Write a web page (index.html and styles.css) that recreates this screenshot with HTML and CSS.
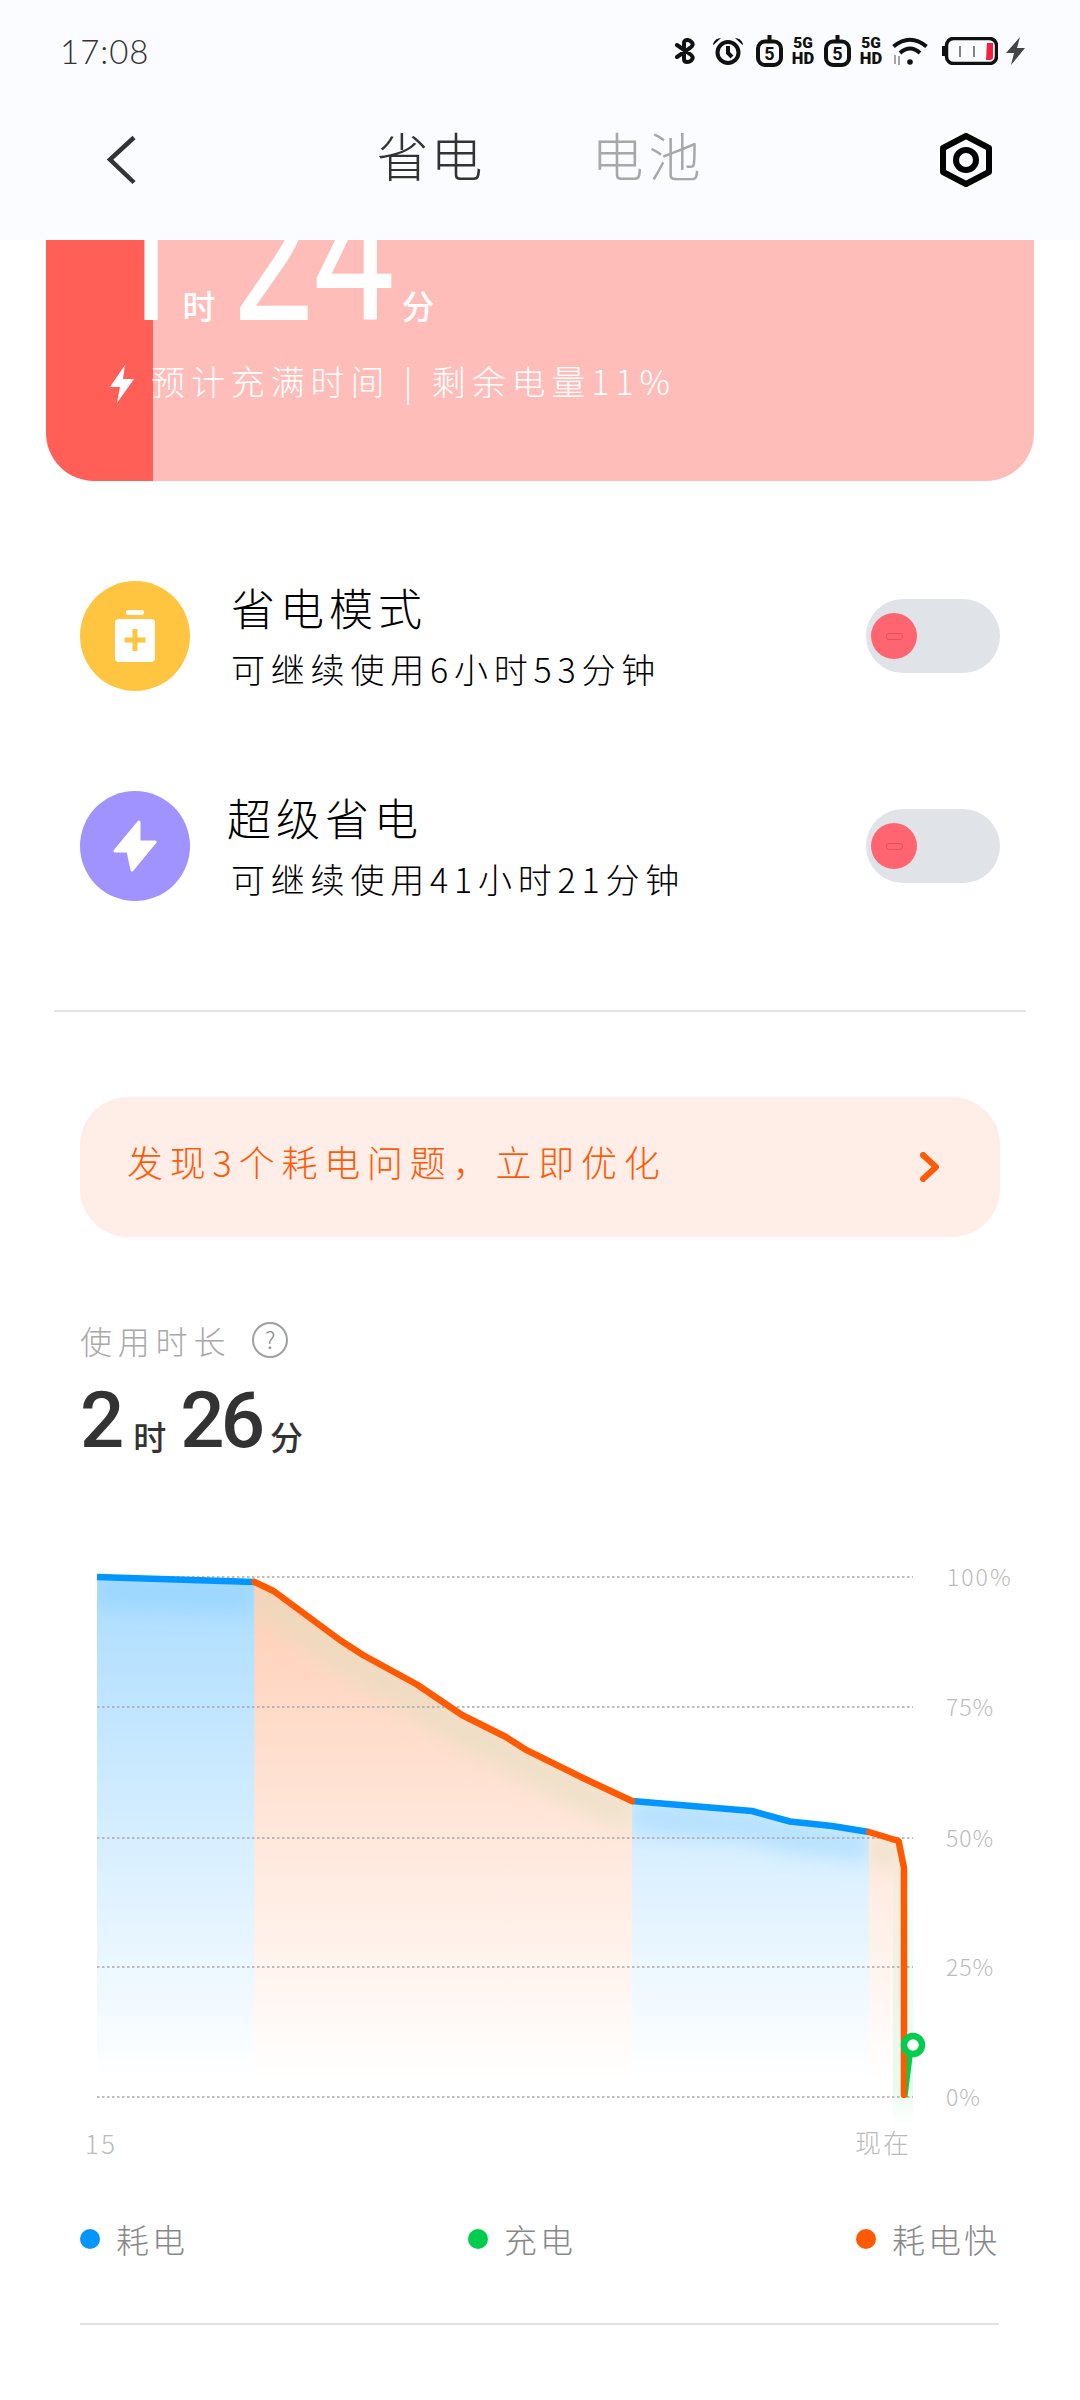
FILE: index.html
```html
<!DOCTYPE html>
<html lang="zh-CN">
<head>
<meta charset="utf-8">
<title>省电</title>
<link rel="stylesheet" href="styles.css">
</head>
<body>
<div class="page">
  <header class="top">
    <div class="status">
      <span class="clock">17:08</span>
      <div class="status-icons">
        <svg class="ic-bt" viewBox="0 0 21 26" width="21" height="26"><path d="M2 19 L15 10 Q19 7 17 4.5 Q15 1.8 12 2 Q9 2.5 9 5 V21 Q9 24 12 24 Q15.5 24 17 21.5 Q19 19 15 16 L2 7"/></svg>
        <svg class="ic-alarm" viewBox="0 0 32 28" width="32" height="28"><circle cx="16" cy="15.5" r="10.5"/><path d="M16 9 V16 L20 20"/><path class="solid" d="M1 7 Q3 1 9 1 L1.5 8Z M31 7 Q29 1 23 1 L30.5 8Z"/></svg>
        <svg class="ic-timer" viewBox="0 0 27 32" width="27" height="32"><path d="M13.5 0 V6"/><rect x="2" y="6.5" width="23" height="23.5" rx="7"/><text class="timer-num" x="13.5" y="24.500">5</text></svg>
        <div class="net"><span>5G</span><span>HD</span></div>
        <svg class="ic-timer" viewBox="0 0 27 32" width="27" height="32"><path d="M13.5 0 V6"/><rect x="2" y="6.5" width="23" height="23.5" rx="7"/><text class="timer-num" x="13.5" y="24.500">5</text></svg>
        <div class="net"><span>5G</span><span>HD</span></div>
        <svg class="ic-wifi" viewBox="0 0 36 28" width="36" height="28"><path d="M1.5 9.5 Q18 -4 34.5 9.5"/><path d="M8 16 Q18 7 28 16"/><circle class="solid" cx="18" cy="25" r="2.8"/><path class="thin" d="M3 18 V27 M7 19 V28"/></svg>
        <svg class="ic-batt" viewBox="0 0 56 28" width="56" height="28"><path class="solid" d="M0 9 h3 v10 h-3z"/><rect x="4.5" y="1.5" width="50" height="25" rx="7"/><path class="thin" d="M18 9 V20 M32 9 V20"/><path class="red" d="M45 6 H51 V20 Q51 23 48 23 H44Z"/></svg>
        <svg class="ic-charge" viewBox="0 0 19 28" width="19" height="28"><path d="M14 0 L0 16 H8 L5 28 L19 11 H11Z"/></svg>
      </div>
    </div>
    <nav class="nav">
      <svg class="ic-back" viewBox="0 0 30 50" width="30" height="50"><path d="M28 2.5 L4 24.5 L28 47.5"/></svg>
      <div class="tabs">
        <span class="tab tab-on">省电</span>
        <span class="tab tab-off">电池</span>
      </div>
      <svg class="ic-gear" viewBox="0 0 52 54" width="52" height="54"><path d="M26 3 L49 15 V39 L26 51 L3 39 V15Z"/><circle cx="26" cy="27" r="10"/></svg>
    </nav>
  </header>

  <section class="hero">
    <div class="hero-time"><b>1</b><i>时</i><b>24</b><i>分</i></div>
    <div class="hero-sub">
      <svg class="ic-hero" viewBox="0 0 24 38" width="24" height="38"><path d="M15 0 L0 22 H10 L7 38 L24 14 H13Z"/></svg>
      <span>预计充满时间 | 剩余电量11%</span>
    </div>
  </section>

  <section class="modes">
    <div class="mode">
      <div class="badge badge-y">
        <svg viewBox="0 0 40 52" width="40" height="52"><rect class="w" x="11" y="0" width="18" height="5" rx="2.5"/><rect class="w" x="0" y="9" width="40" height="43" rx="4"/><path class="plus" d="M20 19 V41 M9.500 30 H30.500"/></svg>
      </div>
      <div class="mode-text">
        <div class="mode-title">省电模式</div>
        <div class="mode-sub">可继续使用6小时53分钟</div>
      </div>
      <div class="toggle"><span class="knob"></span></div>
    </div>
    <div class="mode">
      <div class="badge badge-p">
        <svg viewBox="0 0 44 52" width="44" height="52"><path class="w w-round" d="M26 2 L2 31 H15 L19 50 L42 22 H26Z"/></svg>
      </div>
      <div class="mode-text">
        <div class="mode-title mode-title-2">超级省电</div>
        <div class="mode-sub">可继续使用41小时21分钟</div>
      </div>
      <div class="toggle"><span class="knob"></span></div>
    </div>
  </section>

  <hr class="rule">

  <div class="tip">
    <span>发现3个耗电问题，立即优化</span>
    <svg viewBox="0 0 20 30" width="20" height="30"><path d="M3 3 L16 15 L3 27"/></svg>
  </div>

  <div class="usage-label">
    <span>使用时长</span>
    <span class="help">?</span>
  </div>
  <div class="usage-time"><b>2</b><i>时</i><b>26</b><i>分</i></div>

  <div class="chart">
    <svg viewBox="60 1560 960 600" width="960" height="600">
      <defs>
        <linearGradient id="fadeBlue" gradientUnits="userSpaceOnUse" x1="0" y1="1576" x2="0" y2="2080">
          <stop offset="0" stop-color="#0096ff" stop-opacity=".33"/>
          <stop offset="1" stop-color="#0096ff" stop-opacity="0"/>
        </linearGradient>
        <linearGradient id="fadeOrange" gradientUnits="userSpaceOnUse" x1="0" y1="1576" x2="0" y2="2080">
          <stop offset="0" stop-color="#ff5a08" stop-opacity=".3"/>
          <stop offset="1" stop-color="#ff5a08" stop-opacity="0"/>
        </linearGradient>
        <linearGradient id="fadeGreen" gradientUnits="userSpaceOnUse" x1="0" y1="1867" x2="0" y2="2125">
          <stop offset="0" stop-color="#00cc4e" stop-opacity=".02"/>
          <stop offset=".85" stop-color="#00cc4e" stop-opacity=".09"/>
          <stop offset="1" stop-color="#00cc4e" stop-opacity="0"/>
        </linearGradient>
        <clipPath id="clipBlue"><path d="M97 1576 L254.500 1581 V2096 H97Z M632 1800 L752 1810 L790 1820.500 L832 1825 L869 1831 V2096 H632Z"/></clipPath>
        <clipPath id="clipOrange"><path d="M254.500 1581 L273.600 1590 L340.600 1639.500 L363 1654 L417 1683.500 L462 1714 L506 1736 L525.600 1748.600 L583 1777 L632 1800 V2096 H254.500Z M869 1831 L898.600 1840 L904 1867 V2096 H869Z"/></clipPath>
        <filter id="soft" filterUnits="userSpaceOnUse" x="60" y="1540" width="900" height="400"><feGaussianBlur stdDeviation="10"/></filter>
      </defs>
      <rect class="glow" x="893" y="1867" width="20" height="258"/>
      <path class="area-b" d="M97 1576 L254.500 1581 V2096 H97Z M632 1800 L752 1810 L790 1820.500 L832 1825 L869 1831 V2096 H632Z"/>
      <path class="area-o" d="M254.500 1581 L273.600 1590 L340.600 1639.500 L363 1654 L417 1683.500 L462 1714 L506 1736 L525.600 1748.600 L583 1777 L632 1800 V2096 H254.500Z M869 1831 L898.600 1840 L904 1867 V2096 H869Z"/>
      <g clip-path="url(#clipBlue)"><path class="band-b" filter="url(#soft)" d="M97 1592 L254.500 1597 M632 1816 L752 1826 L790 1836.500 L832 1841 L869 1847"/></g>
      <g clip-path="url(#clipOrange)"><path class="band-o" filter="url(#soft)" d="M254.500 1597 L273.600 1606 L340.600 1655.500 L363 1670 L417 1699.500 L462 1730 L506 1752 L525.600 1764.600 L583 1793 L632 1816 M869 1847 L898.600 1856"/></g>
      <path class="grid" d="M97 1576 H913 M97 1706 H913 M97 1837 H913 M97 1966 H913 M97 2096 H913"/>
      <path class="line-b" d="M97 1576 L254.500 1581 M632 1800 L752 1810 L790 1820.500 L832 1825 L869 1831"/>
      <path class="line-o" d="M254.500 1581 L273.600 1590 L340.600 1639.500 L363 1654 L417 1683.500 L462 1714 L506 1736 L525.600 1748.600 L583 1777 L632 1800 M869 1831 L898.600 1840 L904 1867 V2094"/>
      <path class="pin" d="M907 2052 L912.500 2056 L907.500 2096 H906.500Z"/>
      <circle class="pin-ring" cx="913" cy="2044" r="9"/>
      <text class="axis" x="947" y="1585">100%</text>
      <text class="axis axis-s" x="946" y="1715">75%</text>
      <text class="axis axis-s" x="946" y="1846">50%</text>
      <text class="axis axis-s" x="946" y="1975">25%</text>
      <text class="axis axis-s" x="946" y="2105">0%</text>
      <text class="axis axis-x" x="85" y="2153">15</text>
      <text class="axis axis-x" x="855" y="2152">现在</text>
    </svg>
  </div>

  <div class="legend">
    <div class="key"><span class="dot dot-b"></span>耗电</div>
    <div class="key"><span class="dot dot-g"></span>充电</div>
    <div class="key"><span class="dot dot-o"></span>耗电快</div>
  </div>
  <hr class="rule rule-b">
</div>
</body>
</html>
```
FILE: styles.css
```css
* { box-sizing: border-box; }
html, body { margin: 0; padding: 0; background: #fff; }
body { font-family: "Noto Sans CJK SC", "Noto Sans", sans-serif; font-weight: 300; }
.page { width: 1080px; height: 2400px; overflow: hidden; }

/* header */
.top { height: 240px; background: #fbfcff; }
.status { height: 85px; padding: 37px 55px 0 60px; display: flex; justify-content: space-between; align-items: flex-start; }
.clock { font-family: "Lato", sans-serif; font-weight: 300; font-size: 33px; line-height: 28px; letter-spacing: 1px; color: #333; }
.status-icons { display: flex; align-items: center; height: 32px; margin-top: -2px; }
.status-icons svg { fill: none; stroke: #111; stroke-width: 4; display: block; }
.status-icons .solid { fill: #111; stroke: none; }
.ic-bt { margin-right: 16px; stroke-linecap: round; }
.ic-alarm { margin-right: 12px; }
.ic-timer { margin-right: 7px; }
.timer-num { font-family: "Roboto", sans-serif; font-size: 18px; font-weight: 700; text-anchor: middle; fill: #111; stroke: none; }
.net { display: flex; flex-direction: column; width: 26px; margin-right: 8px; font-family: "Roboto", sans-serif; font-weight: 900; color: #111; text-align: center; }
.net span { font-size: 15.500px; line-height: 16px; }
.net span + span { font-size: 16.500px; }
.status-icons .ic-wifi { margin-right: 14px; stroke-width: 4; }
.status-icons .ic-wifi .thin { stroke: #888; stroke-width: 1.500; }
.status-icons .ic-batt { margin-right: 8px; stroke-width: 3.500; }
.status-icons .ic-batt .thin { stroke: #333; stroke-width: 1.200; }
.status-icons .ic-batt .red { fill: #f5203f; stroke: none; }
.status-icons .ic-charge { fill: #444; stroke: none; }

.nav { height: 155px; padding: 0 88px 6px 106px; display: flex; align-items: center; justify-content: space-between; }
.ic-back { fill: none; stroke: #333; stroke-width: 4.500; }
.tabs { display: flex; gap: 107px; margin-left: 6px; margin-top: -10px; }
.tab { font-size: 52px; line-height: 60px; letter-spacing: 2px; color: #a8a8a8; }
.tab-on { color: #333; }
.tab-off { letter-spacing: 5px; }
.ic-gear { fill: none; stroke: #000; stroke-width: 6; stroke-linejoin: round; }

/* hero */
.hero { height: 241px; margin: 0 46px; border-radius: 0 0 48px 48px; overflow: hidden; color: #fff;
  background: linear-gradient(90deg, #ff5f57 107px, #ffbdb9 107px); }
.hero-time { height: 81px; padding-left: 60px; display: flex; align-items: flex-end; }
.hero-time b { font-family: "Roboto", sans-serif; font-weight: 400; font-size: 145px; line-height: 60px; height: 81px; display: block; transform: scaleY(1.32); transform-origin: 0 79.500px; }
.hero-time i { font-style: normal; font-weight: 500; font-size: 33px; line-height: 40px; margin: 0 16px 0 -5px; transform: translateY(4px); }
.hero-time b + i + b + i { margin-left: 7px; }
.hero-sub { display: flex; align-items: center; padding-left: 64px; margin-top: 44px; height: 38px; }
.hero-sub span { font-size: 34px; line-height: 38px; letter-spacing: 5.900px; margin: 0 0 6px 17px; }
.ic-hero { fill: #fff; }

/* modes */
.modes { margin-top: 100px; padding: 0 80px; display: flex; flex-direction: column; gap: 100px; }
.mode { height: 110px; display: flex; align-items: center; }
.badge { width: 110px; height: 110px; border-radius: 50%; display: flex; align-items: center; justify-content: center; flex: none; }
.badge-y { background: #ffc440; }
.badge-p { background: #a093ff; }
.badge .w { fill: #fff; }
.badge .w-round { stroke: #fff; stroke-width: 3; stroke-linejoin: round; }
.badge .plus { fill: none; stroke: #ffc440; stroke-width: 5; }
.mode-text { flex: 1; margin-left: 41px; padding-top: 7px; }
.mode-title { font-size: 44px; line-height: 52px; letter-spacing: 5px; color: #000; margin-top: -8px; }
.mode-title-2 { margin-left: -4px; }
.mode-sub { font-size: 34px; line-height: 42px; letter-spacing: 5.800px; color: #000; margin-top: 15px; }
.toggle { width: 134px; height: 74px; border-radius: 37px; background: #e0e4e8; padding: 14px 5px; flex: none; }
.knob { display: flex; align-items: center; justify-content: center; width: 46px; height: 46px; border-radius: 50%; background: #ff6570; }
.knob::after { content: ""; width: 15px; height: 5px; border-radius: 3px; border: 1px solid rgba(190, 60, 70, .45); }

.rule { border: 0; height: 2px; background: #e2e2e2; margin: 109px 54px 0; }
.tip { margin: 85px 80px 0; height: 140px; padding: 0 60px 0 47px; border-radius: 48px; background: #ffeee7; color: #ff5a08; display: flex; align-items: center; justify-content: space-between; }
.tip span { font-size: 36px; line-height: 44px; letter-spacing: 6.800px; margin-bottom: 12px; }
.tip svg { fill: none; stroke: #ff5a08; stroke-width: 6; stroke-linecap: round; stroke-linejoin: round; }

.usage-label { margin: 84px 80px 0; height: 38px; display: flex; align-items: center; gap: 24px; color: #a8a8a8; }
.usage-label span:first-child { font-size: 32px; line-height: 38px; letter-spacing: 5.800px; }
.help { width: 36px; height: 36px; border: 2.500px solid #a0a0a0; border-radius: 50%; font-size: 23px; line-height: 30px; text-align: center; color: #888; margin-left: -3px; }
.usage-time { margin: 27px 80px 0; height: 70px; display: flex; align-items: flex-end; color: #333; }
.usage-time b { font-family: "Roboto", sans-serif; font-weight: 500; font-size: 78px; line-height: 70px; height: 70px; display: block; letter-spacing: -4px; }
.usage-time i { font-style: normal; font-weight: 500; font-size: 33px; line-height: 40px; margin: 0 14px 0 13px; }
.usage-time b + i + b + i { margin-left: 9px; }

.chart { margin: 105px 60px 0; height: 600px; }
.chart svg { display: block; }
.glow { fill: url(#fadeGreen); }
.area-b { fill: url(#fadeBlue); }
.area-o { fill: url(#fadeOrange); }
.band-b { fill: none; stroke: #78c8ff; stroke-width: 30; stroke-opacity: .35; }
.band-o { fill: none; stroke: #dde0c0; stroke-width: 30; stroke-opacity: .5; }
.grid { fill: none; stroke: #a8a8a8; stroke-width: 1.500; stroke-dasharray: 2.500 2.500; }
.line-b { fill: none; stroke: #0096ff; stroke-width: 6.500; stroke-linejoin: round; }
.line-o { fill: none; stroke: #ff5a00; stroke-width: 6.500; stroke-linejoin: round; stroke-linecap: round; }
.pin { fill: #00cc4e; }
.pin-ring { fill: #fff; stroke: #00cc4e; stroke-width: 6.500; }
.axis { font-size: 23px; letter-spacing: 2px; fill: #bbb; }
.axis-s { letter-spacing: 1px; }
.axis-x { font-size: 26px; letter-spacing: 2px; }

.legend { margin: 58px 80px 0; height: 40px; display: flex; justify-content: space-between; }
.key { display: flex; align-items: center; font-size: 33px; line-height: 40px; letter-spacing: 3px; color: #888; }
.dot { width: 20px; height: 20px; border-radius: 50%; margin-right: 16px; }
.dot-b { background: #0096ff; }
.dot-g { background: #00cc4e; }
.dot-o { background: #ff5a00; }
.rule-b { margin: 64px 81px 0 80px; }
```
